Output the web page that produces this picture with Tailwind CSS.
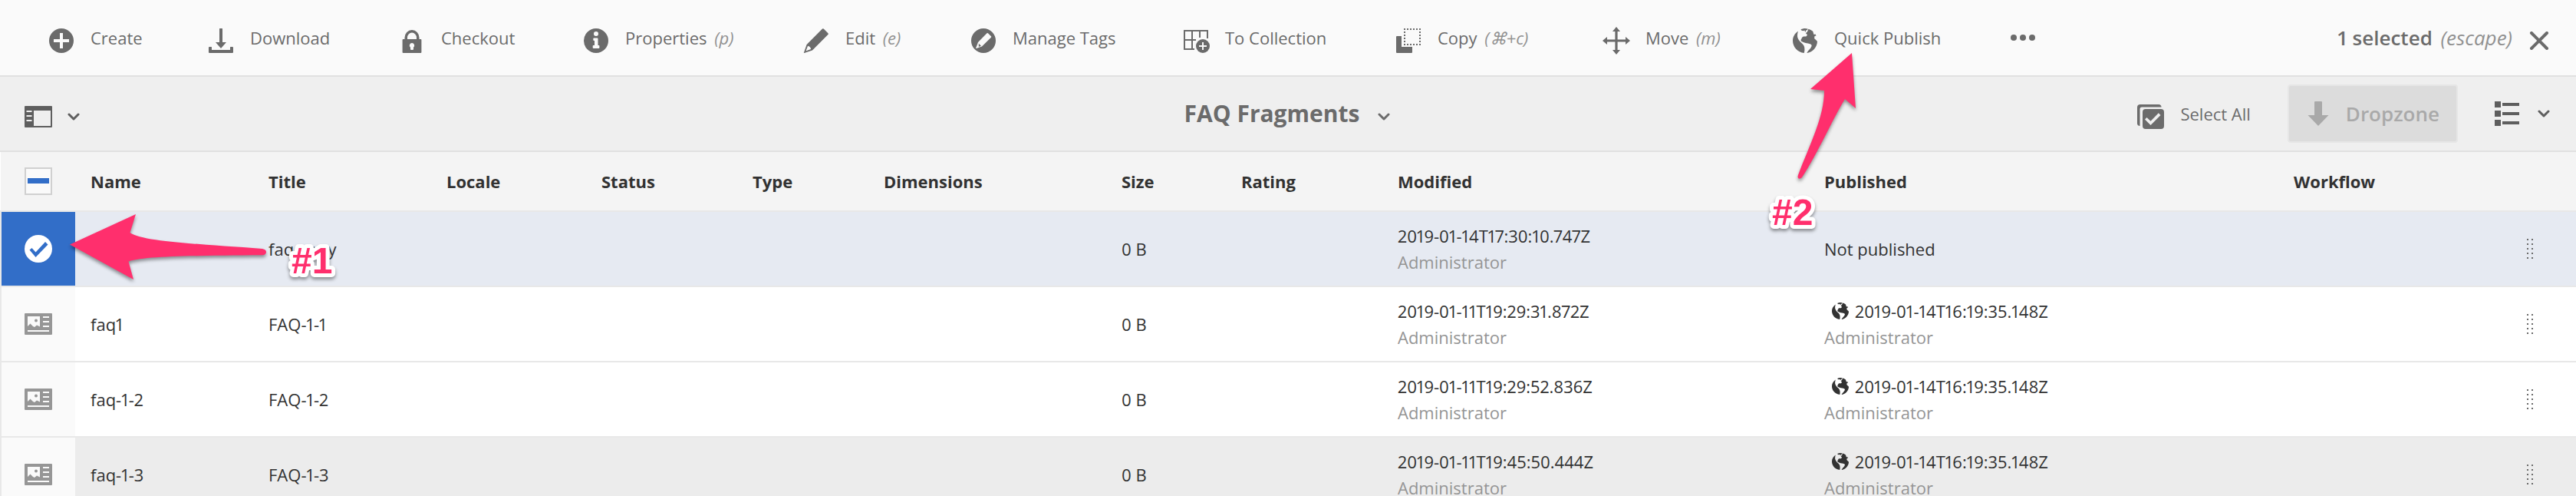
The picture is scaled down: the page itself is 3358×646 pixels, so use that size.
<!DOCTYPE html>
<html lang="en">
<head>
<meta charset="utf-8">
<title>FAQ Fragments</title>
<script src="https://cdn.jsdelivr.net/npm/@tailwindcss/browser@4"></script>
</head>
<body class="relative h-screen overflow-hidden bg-white font-['Open_Sans','Noto_Sans',sans-serif] text-[22px] leading-[34px] proportional-nums text-[#323232]">

<!-- Shared icon shapes -->
<svg class="hidden" aria-hidden="true">
  <symbol id="globe" viewBox="0 0 32 32">
    <path d="M7 3.6C2.800 6.400 0 11 0 16c0 8.200 6.300 15.200 14.800 16 .8-2.800 1-6.200-.2-9.200-1.400-3.200-4.800-4.600-6.600-7.600-1-1.800-2.200-3.600-2-6C6.100 7 6.400 5.400 7 3.600z"/>
    <path d="M10.400 1.400C12 .6 14 0 16 0l3.500.4-.3 1.600-2 .4-.4 2.200-1.200-.6.2-1.400-2.200.6-2-.4z"/>
    <path d="M20.500.7c2 .6 4 1.600 5.700 3L27.500 8l2-.6 1 2-2 .6-.4 3 2.600 2.600L32 17c-.4 7.600-6 13.800-13 15l-.6-.3c1.600-3.300 5-5 6.200-8.700.2-1.400-.6-2.200-2-2.800-3.600-1-8-1-11.800-3.600l-.2-1.800c1-1.200 1.200-2.800 2.400-3.800 1.400-.8 3-.6 4.400-.4L19 8.500l-2-2.300 2-2z"/>
  </symbol>
  <symbol id="chevron" viewBox="0 0 16 10">
    <path d="M2 2l6 6 6-6" fill="none" stroke="currentColor" stroke-width="3" stroke-linecap="round" stroke-linejoin="round"/>
  </symbol>
  <symbol id="card" viewBox="0 0 36 28">
    <path fill-rule="evenodd" d="M1 0h34a1 1 0 0 1 1 1v26a1 1 0 0 1-1 1H1a1 1 0 0 1-1-1V1a1 1 0 0 1 1-1zM4 4v13l3.500-3.500L11 17l2 1 3-2.500 4 2V4zM24 4v2h8V4zM24 10v2h8v-2zM24 16v2h8v-2zM4 22v2h28v-2z"/>
    <circle cx="15" cy="9.500" r="2"/>
  </symbol>
  <symbol id="handle" viewBox="0 0 8 26">
    <path d="M0 0h2v2H0zM6 0h2v2H6zM0 6h2v2H0zM6 6h2v2H6zM0 12h2v2H0zM6 12h2v2H6zM0 18h2v2H0zM6 18h2v2H6zM0 24h2v2H0zM6 24h2v2H6z"/>
  </symbol>
</svg>

<!-- Action bar -->
<header class="flex h-[100px] items-center justify-between border-b-2 border-[#e1e1e1] bg-[#fafafa] pl-[62px] pr-[34px] text-[#6b6b6b]">
  <ul class="flex items-center whitespace-nowrap">
    <li class="w-[208px]"><button class="flex items-center gap-5">
      <svg class="h-8 w-9 translate-y-1" viewBox="0 0 36 32" fill="currentColor"><path d="M18 0a16 16 0 1 0 0 32 16 16 0 0 0 0-32z"/><path d="M18 6v20M8 16h20" stroke="#fafafa" stroke-width="4"/></svg>
      <span>Create</span></button></li>
    <li class="w-[249px]"><button class="flex items-center gap-5">
      <svg class="h-8 w-9 translate-y-1" viewBox="0 0 36 32" fill="currentColor"><path d="M16.500 0h3a.5.5 0 0 1 .5.5V18h5l-6.500 7.500a.7.7 0 0 1-1 0L11 18h5V.5a.5.5 0 0 1 .5-.5zM3 24h2.400a.6.6 0 0 1 .6.600V28h24v-3.400a.6.6 0 0 1 .6-.6H33a1 1 0 0 1 1 1v6a1 1 0 0 1-1 1H3a1 1 0 0 1-1-1v-6a1 1 0 0 1 1-1z"/></svg>
      <span>Download</span></button></li>
    <li class="w-[240px]"><button class="flex items-center gap-5">
      <svg class="h-8 w-9 translate-y-1" viewBox="0 0 36 32" fill="currentColor"><path fill-rule="evenodd" d="M8.500 14v-2a9.500 10 0 0 1 19 0v2h1.900a1 1 0 0 1 1 1v16a1 1 0 0 1-1 1H6.600a1 1 0 0 1-1-1V15a1 1 0 0 1 1-1zM12 14h12v-2a6 6.500 0 0 0-12 0zM18 19a3.200 3.200 0 0 0-2 5.700V27a1 1 0 0 0 1 1h2a1 1 0 0 0 1-1v-2.300A3.200 3.200 0 0 0 18 19z"/></svg>
      <span>Checkout</span></button></li>
    <li class="w-[287px]"><button class="flex items-center gap-5">
      <svg class="h-8 w-9 translate-y-1" viewBox="0 0 36 32" fill="currentColor"><path fill-rule="evenodd" d="M18 0a16 16 0 1 0 0 32 16 16 0 0 0 0-32zM18 4a3 3 0 1 1 0 6 3 3 0 0 1 0-6zM15.500 12.500h4a1 1 0 0 1 1 1V22h1a.9.9 0 0 1 .9.900V25a1 1 0 0 1-.9 1h-6.800a1 1 0 0 1-1-1v-2.100a.9.9 0 0 1 .9-.9H16v-6h-.7a1 1 0 0 1-1-1v-1.500a1 1 0 0 1 1-1z"/></svg>
      <span>Properties <i class="ml-1 text-[#919191]">(p)</i></span></button></li>
    <li class="w-[218px]"><button class="flex items-center gap-5">
      <svg class="h-8 w-9 translate-y-1" viewBox="0 0 36 32" fill="currentColor"><path fill-rule="evenodd" d="M26 .6a1.200 1.200 0 0 1 1.700 0l5.700 5.700a1.200 1.200 0 0 1 0 1.700L13 28.400 2.500 32a.5.5 0 0 1-.6-.6L5.600 21zM7 23L4.500 29.500 11 27c0-2.200-1.800-4-4-4z"/></svg>
      <span>Edit <i class="ml-1 text-[#919191]">(e)</i></span></button></li>
    <li class="w-[277px]"><button class="flex items-center gap-5">
      <svg class="h-8 w-9 translate-y-1" viewBox="0 0 36 32" fill="currentColor"><path fill-rule="evenodd" d="M18 0a16 16 0 1 0 0 32 16 16 0 0 0 0-32zM22.500 6.300a1 1 0 0 1 1.400 0l4 4a1 1 0 0 1 0 1.400L16 23.500 8.800 26a.5.5 0 0 1-.6-.6L11 18z"/><path d="M11.800 19.800l3.200 3-3.200 1.200z"/></svg>
      <span>Manage Tags</span></button></li>
    <li class="w-[277px]"><button class="flex items-center gap-5">
      <svg class="h-8 w-9 translate-y-1" viewBox="0 0 36 32"><path d="M16 27H3V3h30v10M3 15h15M13 3v24M23 3v9" fill="none" stroke="currentColor" stroke-width="2"/><circle cx="27" cy="23" r="9" fill="currentColor"/><path d="M27 18v10M22 23h10" stroke="#fafafa" stroke-width="2"/></svg>
      <span>To Collection</span></button></li>
    <li class="w-[271px]"><button class="flex items-center gap-5">
      <svg class="h-8 w-9 translate-y-1" viewBox="0 0 36 32" fill="currentColor"><path d="M3 10h6v14h14v7a1 1 0 0 1-1 1H3a1 1 0 0 1-1-1V11a1 1 0 0 1 1-1z"/><path d="M12 1h22M12 21h22" fill="none" stroke="currentColor" stroke-width="2" stroke-dasharray="2 2"/><path d="M13 0v22M33 0v22" fill="none" stroke="currentColor" stroke-width="2" stroke-dasharray="2 2"/></svg>
      <span>Copy <i class="ml-1 text-[#919191]">(⌘+c)</i></span></button></li>
    <li class="w-[246px]"><button class="flex items-center gap-5">
      <svg class="h-9 w-9 translate-y-1" viewBox="0 0 36 36" fill="currentColor"><path d="M18 0l5 6h-3.400v10.400H30V13l6 5-6 5v-3.400H19.600V30H23l-5 6-5-6h3.400V19.600H6V23l-6-5 6-5v3.400h10.400V6H13z"/></svg>
      <span>Move <i class="ml-1 text-[#919191]">(m)</i></span></button></li>
    <li class="w-[284px]"><button class="flex items-center gap-5">
      <svg class="h-8 w-9 translate-y-1" fill="currentColor"><use href="#globe"/></svg>
      <span>Quick Publish</span></button></li>
    <li><button class="flex items-center" aria-label="More actions">
      <svg class="h-2 w-9" viewBox="0 0 36 8" fill="currentColor"><circle cx="6" cy="4" r="4"/><circle cx="18" cy="4" r="4"/><circle cx="30" cy="4" r="4"/></svg></button></li>
  </ul>
  <button class="flex items-center gap-[21px] whitespace-nowrap text-[26px] font-semibold">
    <span>1 selected <i class="ml-1 font-medium text-[#919191]">(escape)</i></span>
    <svg class="h-6 w-7 translate-y-1" viewBox="0 0 28 24" fill="none" stroke="currentColor" stroke-width="4" stroke-linecap="round"><path d="M4 2l20 20M24 2L4 22"/></svg>
  </button>
</header>

<!-- View bar -->
<nav class="grid h-[98px] grid-cols-[1fr_auto_1fr] items-center border-b-2 border-[#e1e1e1] bg-[#efefef] pl-8 pr-[34px] text-[#6b6b6b]">
  <button class="flex items-center gap-5 justify-self-start text-[#5e5e5e]" aria-label="Toggle side panel">
    <svg class="h-7 w-9 translate-y-1" viewBox="0 0 36 28" fill="currentColor"><path fill-rule="evenodd" d="M1 0h34a1 1 0 0 1 1 1v26a1 1 0 0 1-1 1H1a1 1 0 0 1-1-1V1a1 1 0 0 1 1-1zM12 6v20h22V6zM2.500 6v2h7V6zM2.500 12v2h7v-2zM2.500 18v2h7v-2z"/></svg>
    <svg class="h-[10px] w-4 translate-y-1"><use href="#chevron"/></svg>
  </button>
  <button class="flex items-center gap-6 text-3xl leading-10 font-bold">
    <span>FAQ Fragments</span>
    <svg class="h-[10px] w-4 translate-y-1"><use href="#chevron"/></svg>
  </button>
  <div class="flex items-center justify-self-end whitespace-nowrap">
    <button class="mr-12 flex items-center gap-5">
      <svg class="h-8 w-9 translate-y-1" viewBox="0 0 36 32" fill="currentColor"><path d="M3.500 28A3.500 3.500 0 0 1 0 25V4a4 4 0 0 1 4-4h24a4 4 0 0 1 3.600 3.500H6A2.500 2.500 0 0 0 3.500 6v22z"/><path fill-rule="evenodd" d="M11 6h20a4 4 0 0 1 4 4v18a4 4 0 0 1-4 4H11a4 4 0 0 1-4-4V10a4 4 0 0 1 4-4zM12.500 17L10 19.500l7.500 7.500 13-13-2.700-2.700L17.500 21.800z"/></svg>
      <span>Select All</span></button>
    <button disabled class="mr-12 flex h-[76px] items-center gap-5 rounded border-2 border-[#e6e6e6] bg-[#dcdcdc] px-[22px] text-[26px] font-semibold text-[#a9a9a9]">
      <svg class="h-8 w-8" viewBox="0 0 32 32" fill="currentColor"><path d="M12 0h8a1 1 0 0 1 1 1v17h8.500L16 32 2.500 18H11V1a1 1 0 0 1 1-1z"/></svg>
      <span>Dropzone</span></button>
    <button class="flex items-center gap-6 text-[#5e5e5e]" aria-label="List view">
      <svg class="h-8 w-8" viewBox="0 0 32 32" fill="currentColor"><path d="M0 0h8v8H0zM10 2h22v4H10zM0 12h8v8H0zM10 14h22v4H10zM0 24h8v8H0zM10 26h22v4H10z"/></svg>
      <svg class="h-[10px] w-4"><use href="#chevron"/></svg>
    </button>
  </div>
</nav>

<!-- Asset list -->
<table class="w-full table-fixed border-collapse whitespace-nowrap text-left">
  <colgroup>
    <col class="w-[97px]"><col class="w-[232px]"><col class="w-[232px]"><col class="w-[202px]"><col class="w-[197px]"><col class="w-[171px]"><col class="w-[310px]"><col class="w-[156px]"><col class="w-[204px]"><col class="w-[556px]"><col class="w-[612px]"><col><col class="w-[84px]">
  </colgroup>
  <thead class="bg-[#f4f4f4]">
    <tr class="h-[77px] border-b-2 border-[#e8e8e8]">
      <th class="p-0 pl-[31px]">
        <label class="relative block h-9 w-9">
          <input type="checkbox" aria-label="Select all items" class="block h-9 w-9 appearance-none border-2 border-[#d0d0d0] bg-[#fafafa]">
          <span class="absolute inset-x-1 top-[14px] h-[7px] bg-[#326ec8]"></span>
        </label>
      </th>
      <th class="px-5 py-0">Name</th><th class="px-5 py-0">Title</th><th class="px-5 py-0">Locale</th><th class="px-5 py-0">Status</th><th class="px-5 py-0">Type</th><th class="px-5 py-0">Dimensions</th><th class="px-5 py-0">Size</th><th class="px-5 py-0">Rating</th><th class="px-5 py-0">Modified</th><th class="px-5 py-0">Published</th><th class="px-5 py-0">Workflow</th><th class="p-0"></th>
    </tr>
  </thead>
  <tbody>
    <tr class="h-[98px] border-b-2 border-[#e8e8e8] bg-[#e6eaf2]">
      <td class="border-l-2 border-[#e8e8e8] bg-[#326ec8] p-0 pl-[30px]">
        <svg class="h-9 w-9" viewBox="0 0 36 36"><circle cx="18" cy="18" r="18" fill="#fff"/><path d="M6.500 19.500L9.500 17l5 5.500L27 9l3.500 3.500L14.500 29z" fill="#326ec8"/></svg></td>
      <td class="px-5 py-0"></td><td class="px-5 py-0">faq-copy</td><td></td><td></td><td></td><td></td><td class="px-5 py-0">0 B</td><td></td>
      <td class="px-5 py-0"><div>2019-01-14T17:30:10.747Z</div><div class="text-[#959595]">Administrator</div></td>
      <td class="px-5 py-0">Not published</td><td></td>
      <td class="p-0 pl-5"><svg class="h-[26px] w-2" fill="#6b6b6b"><use href="#handle"/></svg></td>
    </tr>
    <tr class="h-[98px] border-b-2 border-[#e8e8e8] bg-white">
      <td class="border-l-2 border-[#e8e8e8] bg-[#fafafa] p-0 pl-[30px]"><svg class="h-7 w-9" fill="#969696"><use href="#card"/></svg></td>
      <td class="px-5 py-0">faq1</td><td class="px-5 py-0">FAQ-1-1</td><td></td><td></td><td></td><td></td><td class="px-5 py-0">0 B</td><td></td>
      <td class="px-5 py-0"><div>2019-01-11T19:29:31.872Z</div><div class="text-[#959595]">Administrator</div></td>
      <td class="px-5 py-0"><div class="flex items-center gap-2 pl-[10px]"><svg class="h-[22px] w-[22px]" fill="currentColor"><use href="#globe"/></svg>2019-01-14T16:19:35.148Z</div><div class="text-[#959595]">Administrator</div></td><td></td>
      <td class="p-0 pl-5"><svg class="h-[26px] w-2" fill="#6b6b6b"><use href="#handle"/></svg></td>
    </tr>
    <tr class="h-[98px] border-b-2 border-[#e8e8e8] bg-white">
      <td class="border-l-2 border-[#e8e8e8] bg-[#fafafa] p-0 pl-[30px]"><svg class="h-7 w-9" fill="#969696"><use href="#card"/></svg></td>
      <td class="px-5 py-0">faq-1-2</td><td class="px-5 py-0">FAQ-1-2</td><td></td><td></td><td></td><td></td><td class="px-5 py-0">0 B</td><td></td>
      <td class="px-5 py-0"><div>2019-01-11T19:29:52.836Z</div><div class="text-[#959595]">Administrator</div></td>
      <td class="px-5 py-0"><div class="flex items-center gap-2 pl-[10px]"><svg class="h-[22px] w-[22px]" fill="currentColor"><use href="#globe"/></svg>2019-01-14T16:19:35.148Z</div><div class="text-[#959595]">Administrator</div></td><td></td>
      <td class="p-0 pl-5"><svg class="h-[26px] w-2" fill="#6b6b6b"><use href="#handle"/></svg></td>
    </tr>
    <tr class="h-[98px] border-b-2 border-[#e8e8e8] bg-[#ececec]">
      <td class="border-l-2 border-[#e8e8e8] bg-[#fafafa] p-0 pl-[30px]"><svg class="h-7 w-9" fill="#969696"><use href="#card"/></svg></td>
      <td class="px-5 py-0">faq-1-3</td><td class="px-5 py-0">FAQ-1-3</td><td></td><td></td><td></td><td></td><td class="px-5 py-0">0 B</td><td></td>
      <td class="px-5 py-0"><div>2019-01-11T19:45:50.444Z</div><div class="text-[#959595]">Administrator</div></td>
      <td class="px-5 py-0"><div class="flex items-center gap-2 pl-[10px]"><svg class="h-[22px] w-[22px]" fill="currentColor"><use href="#globe"/></svg>2019-01-14T16:19:35.148Z</div><div class="text-[#959595]">Administrator</div></td><td></td>
      <td class="p-0 pl-5"><svg class="h-[26px] w-2" fill="#6b6b6b"><use href="#handle"/></svg></td>
    </tr>
  </tbody>
</table>

<!-- Callout arrows and step labels -->
<svg class="pointer-events-none absolute top-0 left-0 h-[646px] w-[3358px] font-['Liberation_Sans',sans-serif] text-[48px] font-bold" fill="#ff2f6d">
  <g class="drop-shadow-[0_3px_2px_rgb(0_0_0/0.4)]">
    <path d="M91 318.500L177 279l-7.500 24C186 315 262 318 342 324q5 1 5 4 0 4-5 4.300C262 333 190 333 167.500 340.500L174 364z"/>
    <path d="M2414 69l5 72-14-12c-14 22-36 72-56 102q-3 3-5 1-1-2 0-4c16-42 34-76 34-110l-18-2z"/>
    <g stroke="#fff" stroke-width="10" stroke-linejoin="round" paint-order="stroke">
      <text x="380" y="356">#1</text>
      <text x="2310" y="293">#2</text>
    </g>
  </g>
</svg>
</body>
</html>
